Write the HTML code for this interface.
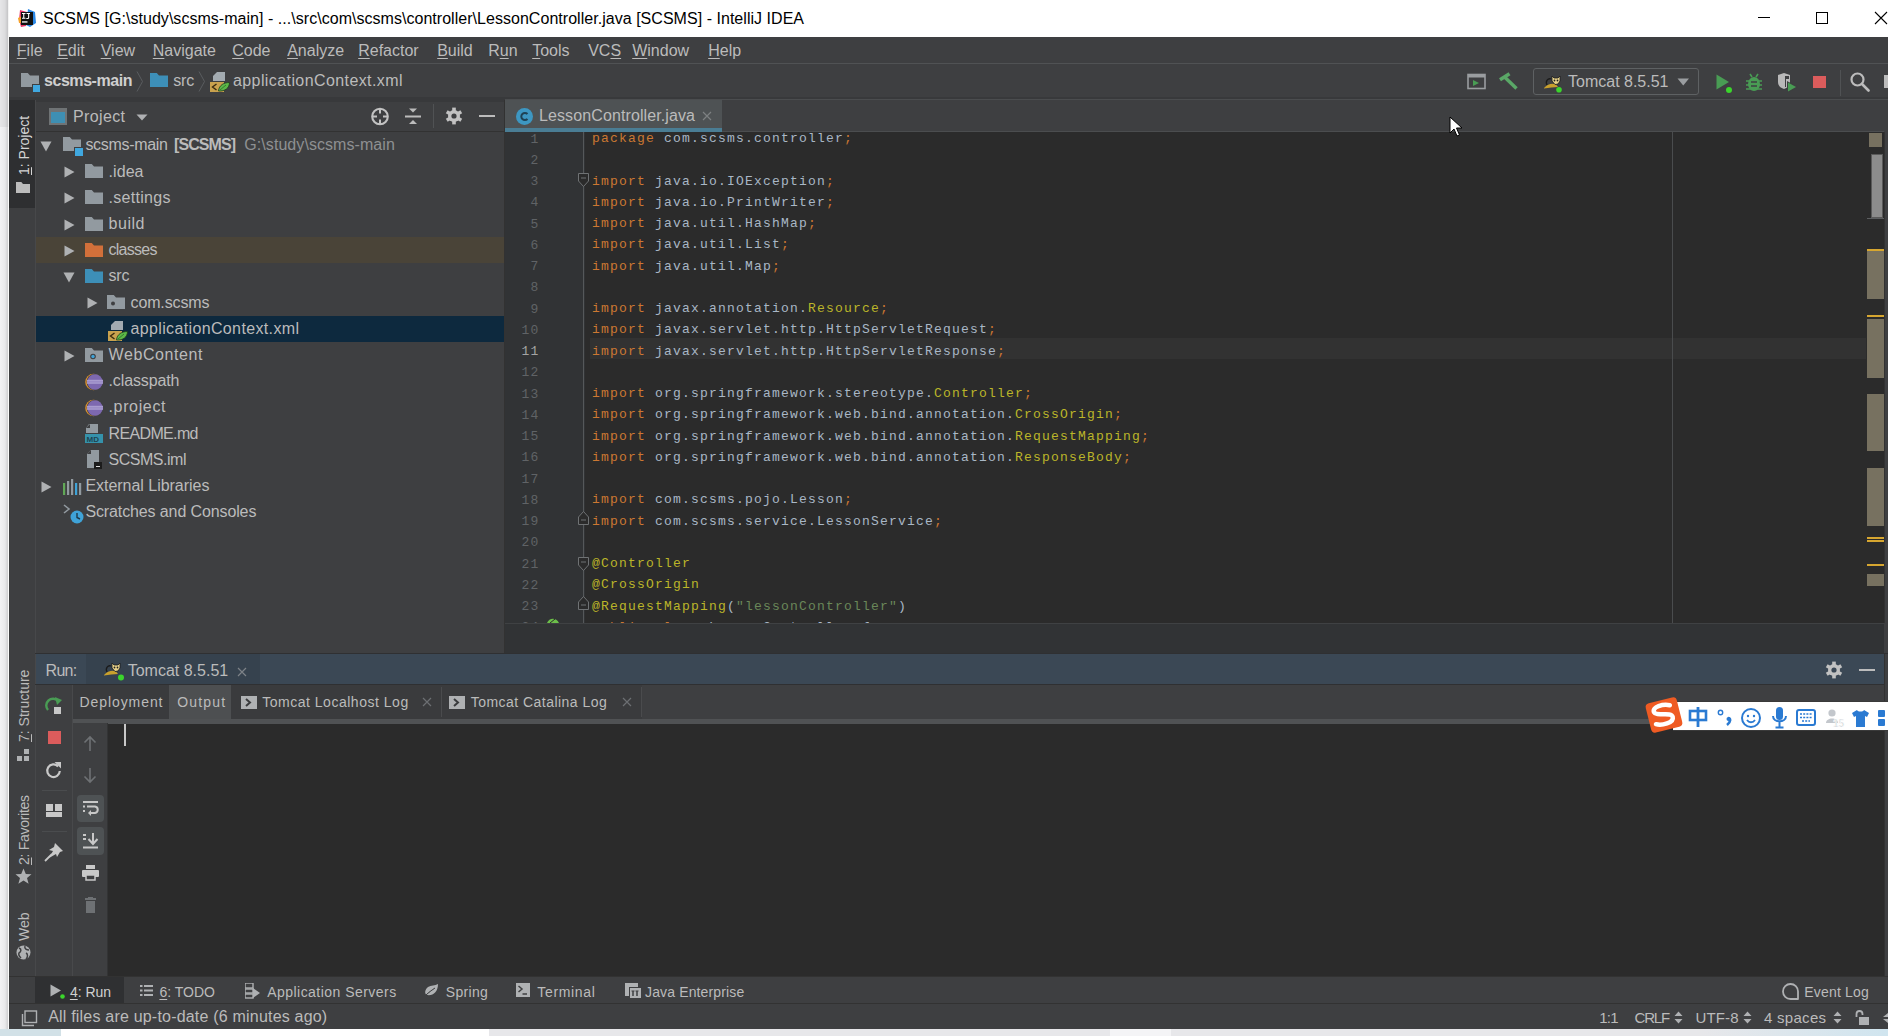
<!DOCTYPE html>
<html><head><meta charset="utf-8">
<style>
*{box-sizing:border-box;margin:0;padding:0}
html,body{width:1888px;height:1036px;overflow:hidden;background:#e6e6e6}
body{position:relative;font-family:"Liberation Sans",sans-serif;font-size:16px;color:#bbbbbb}
.a{position:absolute;display:block}
.t{position:absolute;white-space:pre;line-height:1}
u{text-decoration:underline;text-underline-offset:2px;text-decoration-thickness:1px}
</style></head><body>
<div class="a" style="left:0;top:0;width:9px;height:1036px;background:linear-gradient(90deg,#f2f2f4 0px,#e9e9eb 5px,#d2d2d4 7.5px,#fafafa 8px,#fafafa 9px)"></div>
<div class="a" style="left:0;top:0;width:9px;height:127px;background:linear-gradient(90deg,#e6e6e8 0px,#dcdcde 5px,#c8c8ca 7.5px,#f4f4f4 8px,#f4f4f4 9px)"></div>
<div class="a" style="left:0px;top:1029px;width:1888px;height:7px;background:#e7e7ea;"></div>
<div class="a" style="left:0px;top:1029px;width:61px;height:7px;background:#d2e1e7;"></div>
<div class="a" style="left:61px;top:1029px;width:428px;height:7px;background:#ffffff;"></div>
<div class="a" style="left:1110px;top:1029px;width:61px;height:7px;background:#f4f4f6;"></div>
<div class="a" style="left:1700px;top:1029px;width:188px;height:7px;background:linear-gradient(90deg,#e7e7ea,#d0e5ef)"></div>
<div class="a" style="left:9px;top:0px;width:1879px;height:1029px;background:#3e3f41;"></div>
<div class="a" style="left:9px;top:0px;width:1879px;height:37px;background:#ffffff;"></div>
<svg class="a" style="left:17px;top:8px;" width="22" height="20" viewBox="0 0 22 20"><polygon points="3,2 10,4 9,18 4,19 2,12" fill="#e8386a"/><polygon points="1,10 5,8 5,15 2,15" fill="#f6a12a"/>
<polygon points="11,1 18,4 19,15 13,19 9,17" fill="#2b88e6"/><rect x="4" y="4" width="12" height="13" fill="#111"/>
<path d="M5,5 H8.5 V6 H7.3 V9.8 H8.5 V10.8 H5 V9.8 H6.2 V6 H5 Z M9.5,5 H13 V6 H12.2 V9.5 C12.2,10.5 11.5,11 10.5,11 H9.3 V10 H10.5 C11,10 11.1,9.8 11.1,9.3 V6 H9.5 Z" fill="#fff"/><rect x="5" y="13.3" width="5.5" height="1.3" fill="#fff"/></svg>
<div class="t" style="left:43.00px;top:11.06px;font-size:16px;color:#000000;letter-spacing:0.034px;">SCSMS [G:\study\scsms-main] - ...\src\com\scsms\controller\LessonController.java [SCSMS] - IntelliJ IDEA</div>
<div class="a" style="left:1758px;top:17px;width:12px;height:1px;background:#000;"></div>
<div class="a" style="left:1816px;top:12px;width:12px;height:12px;border:1px solid #000"></div>
<svg class="a" style="left:1874px;top:11px;" width="14" height="14" viewBox="0 0 14 14"><path d="M1,1 L13,13 M13,1 L1,13" stroke="#000" stroke-width="1.1"/></svg>
<div class="a" style="left:9px;top:63px;width:1879px;height:1px;background:#505254;"></div>
<div class="t" style="left:16.80px;top:43.26px;font-size:16px;color:#bbbbbb;"><u>F</u>ile</div>
<div class="t" style="left:57.20px;top:43.26px;font-size:16px;color:#bbbbbb;"><u>E</u>dit</div>
<div class="t" style="left:100.70px;top:43.26px;font-size:16px;color:#bbbbbb;"><u>V</u>iew</div>
<div class="t" style="left:152.80px;top:43.26px;font-size:16px;color:#bbbbbb;"><u>N</u>avigate</div>
<div class="t" style="left:232.20px;top:43.26px;font-size:16px;color:#bbbbbb;"><u>C</u>ode</div>
<div class="t" style="left:287.20px;top:43.26px;font-size:16px;color:#bbbbbb;"><u>A</u>nalyze</div>
<div class="t" style="left:358.20px;top:43.26px;font-size:16px;color:#bbbbbb;"><u>R</u>efactor</div>
<div class="t" style="left:437.20px;top:43.26px;font-size:16px;color:#bbbbbb;"><u>B</u>uild</div>
<div class="t" style="left:488.20px;top:43.26px;font-size:16px;color:#bbbbbb;">R<u>u</u>n</div>
<div class="t" style="left:532.20px;top:43.26px;font-size:16px;color:#bbbbbb;"><u>T</u>ools</div>
<div class="t" style="left:588.20px;top:43.26px;font-size:16px;color:#bbbbbb;">VC<u>S</u></div>
<div class="t" style="left:632.20px;top:43.26px;font-size:16px;color:#bbbbbb;"><u>W</u>indow</div>
<div class="t" style="left:708.20px;top:43.26px;font-size:16px;color:#bbbbbb;"><u>H</u>elp</div>
<div class="a" style="left:9px;top:97px;width:1879px;height:3px;background:#38393b;"></div>
<svg class="a" style="left:21px;top:73px;" width="20" height="19" viewBox="0 0 20 19"><path d="M0,0 H6.8 L9.0,2.5 H18 V14 H0 Z" fill="#929aa0"/><rect x="11" y="11" width="8" height="8" fill="#3e3f41"/><rect x="12" y="12" width="7" height="7" fill="#40a8e0"/></svg>
<div class="t" style="left:44.00px;top:73.46px;font-size:16px;color:#cfcfcf;letter-spacing:-0.444px;font-weight:bold;">scsms-main</div>
<svg class="a" style="left:136px;top:71px;" width="8" height="21" viewBox="0 0 8 21"><path d="M1,0.5 L6.5,10.5 L1,20.5" fill="none" stroke="#5a5d60" stroke-width="1"/></svg>
<svg class="a" style="left:150px;top:73px;" width="19" height="15" viewBox="0 0 19 15"><path d="M0,0 H6.8 L9.0,2.5 H18 V14 H0 Z" fill="#3d8fb8"/></svg>
<div class="t" style="left:173.20px;top:73.46px;font-size:16px;color:#bbbbbb;letter-spacing:-0.164px;">src</div>
<svg class="a" style="left:198px;top:71px;" width="8" height="21" viewBox="0 0 8 21"><path d="M1,0.5 L6.5,10.5 L1,20.5" fill="none" stroke="#5a5d60" stroke-width="1"/></svg>
<svg class="a" style="left:209px;top:70px;" width="22" height="23" viewBox="0 0 22 23"><path d="M8,2 H16 V11 H4 V6 Z" fill="#a3abb1"/><rect x="1" y="12" width="14" height="10" fill="#c9a24e"/><path d="M7.5,14 L3.5,17 L7.5,20" stroke="#3a2a10" stroke-width="1.4" fill="none"/><path d="M9.5,21 C10,15 15,12.5 20.5,12.5 C20.5,18 16,21.5 9.5,21 Z" fill="#5cb848" stroke="#1f3a1a" stroke-width="0.8"/><path d="M11,20 L17,15" stroke="#2f6a28" stroke-width="0.8"/></svg>
<div class="t" style="left:233.00px;top:73.46px;font-size:16px;color:#bbbbbb;letter-spacing:0.406px;">applicationContext.xml</div>
<svg class="a" style="left:1467px;top:73px;" width="20" height="17" viewBox="0 0 20 17"><rect x="1" y="1.5" width="17" height="14" fill="none" stroke="#9a9da0" stroke-width="1.6"/><rect x="1" y="1.5" width="17" height="3" fill="#9a9da0"/><path d="M6,7 L12,10 L6,13 Z" fill="#499c54"/></svg>
<svg class="a" style="left:1498px;top:72px;" width="21" height="19" viewBox="0 0 21 19"><path d="M2,7.8 L11.5,1.8" stroke="#5aa867" stroke-width="3.6"/><path d="M6,4.5 L18.5,16.5" stroke="#5aa867" stroke-width="3.4"/></svg>
<div class="a" style="left:1533px;top:68px;width:166px;height:27px;border:1px solid #5e6163;border-radius:3px"></div>
<svg class="a" style="left:1543px;top:75px;" width="22" height="19" viewBox="0 0 22 19"><path d="M4,10 C2,6 5,3 8,4" stroke="#1a1a1a" stroke-width="1.3" fill="none"/><path d="M1,13 C5,9 9,8 13,9.5 L15,12 C11,12.5 6,12.5 1,13.5 Z" fill="#c9a02c"/><path d="M9,1 L11,3 H15 L17,1 V6 L15,9 L12,9.5 L9,6 Z" fill="#e8d28a" stroke="#1a1a1a" stroke-width="0.8"/><circle cx="11.5" cy="5.5" r="0.9" fill="#222"/><circle cx="14.5" cy="5.5" r="0.9" fill="#222"/><circle cx="16" cy="14.7" r="2.8" fill="#3bd52c"/></svg>
<div class="t" style="left:1568.00px;top:74.46px;font-size:16px;color:#bbbbbb;letter-spacing:0.000px;">Tomcat 8.5.51</div>
<svg class="a" style="left:1677px;top:78px;" width="13" height="8" viewBox="0 0 13 8"><path d="M0.5,0.5 H12 L6.25,7.5 Z" fill="#9a9da0"/></svg>
<svg class="a" style="left:1716px;top:74px;" width="18" height="20" viewBox="0 0 18 20"><path d="M0.5,0.5 L13,8 L0.5,15.5 Z" fill="#499c54"/><circle cx="13" cy="16" r="3" fill="#3bd52c"/></svg>
<svg class="a" style="left:1745px;top:73px;" width="18" height="20" viewBox="0 0 18 20"><path d="M5,1 L7,4 M13,1 L11,4" stroke="#499c54" stroke-width="1.6"/><ellipse cx="9" cy="11" rx="6" ry="7" fill="#499c54"/><path d="M1,8 H17 M1,12 H17 M1,16 H17" stroke="#499c54" stroke-width="1.6"/><path d="M6,9 H12 M6,13 H12" stroke="#3e3f41" stroke-width="1.6"/></svg>
<svg class="a" style="left:1777px;top:73px;" width="22" height="21" viewBox="0 0 22 21"><path d="M1,2 L7,0 L13,2 V9 C13,13 10,15 7,16 C4,15 1,13 1,9 Z" fill="#b9b9b9"/><path d="M8,3 H12 V6 H9 V14 L8,14 Z" fill="#3e3f41"/><path d="M10,8 L21,14 L10,20 Z" fill="#3e3f41"/><path d="M11,9.5 L19,14 L11,18.5 Z" fill="#499c54"/></svg>
<div class="a" style="left:1813px;top:76px;width:13px;height:12px;background:#db5c5c;"></div>
<div class="a" style="left:1840px;top:70px;width:1px;height:26px;background:#505254;"></div>
<svg class="a" style="left:1849px;top:71px;" width="22" height="21" viewBox="0 0 22 21"><circle cx="8.5" cy="8.5" r="6" fill="none" stroke="#bcbcbc" stroke-width="2.2"/><path d="M13,13 L19.5,19.5" stroke="#bcbcbc" stroke-width="2.6" stroke-linecap="round"/></svg>
<div class="a" style="left:1884px;top:75px;width:4px;height:13px;background:#bcbcbc;"></div>
<div class="a" style="left:35px;top:100px;width:1px;height:876px;background:#47484a;"></div>
<div class="a" style="left:9px;top:100px;width:26px;height:108px;background:#2e2f31;"></div>
<div class="t" style="left:16.5px;top:175px;font-size:14px;color:#d4d4d4;transform-origin:0 0;transform:rotate(-90deg)"><u>1</u>: Project</div>
<svg class="a" style="left:16px;top:182px;" width="14" height="12" viewBox="0 0 14 12"><path d="M0,0 H5.3 L7.0,2.0 H14 V11 H0 Z" fill="#bcbcbc"/></svg>
<div class="t" style="left:16.5px;top:742px;font-size:14px;color:#bbbbbb;transform-origin:0 0;transform:rotate(-90deg)"><u>7</u>: Structure</div>
<svg class="a" style="left:16px;top:749px;" width="14" height="13" viewBox="0 0 14 13"><rect x="8" y="0" width="5" height="5" fill="#afb1b3"/><rect x="1" y="7" width="5" height="5" fill="#afb1b3"/><rect x="8" y="7" width="5" height="5" fill="#afb1b3"/></svg>
<div class="t" style="left:16.5px;top:865px;font-size:14px;color:#bbbbbb;transform-origin:0 0;transform:rotate(-90deg)"><span style="letter-spacing:-0.28px"><u>2</u>: Favorites</span></div>
<svg class="a" style="left:15px;top:868px;" width="17" height="17" viewBox="0 0 17 17"><path d="M8.5,0.5 L10.8,6 L16.5,6.3 L12,10 L13.6,15.8 L8.5,12.6 L3.4,15.8 L5,10 L0.5,6.3 L6.2,6 Z" fill="#afb1b3"/></svg>
<div class="t" style="left:16.5px;top:941px;font-size:14px;color:#bbbbbb;transform-origin:0 0;transform:rotate(-90deg)">Web</div>
<svg class="a" style="left:15px;top:944px;" width="17" height="17" viewBox="0 0 17 17"><circle cx="8.5" cy="8.5" r="7" fill="#afb1b3"/><path d="M4,4 C7,5 6,8 4,9 C3,11 5,13 6,14 M10,2 C9,5 12,6 14,6 M11,9 C13,10 13,13 11,15" stroke="#3e3f41" stroke-width="1.5" fill="none"/></svg>
<div class="a" style="left:36px;top:99px;width:469px;height:3px;background:#38393b;"></div>
<div class="a" style="left:36px;top:131px;width:469px;height:1px;background:#323232;"></div>
<div class="a" style="left:504px;top:100px;width:1px;height:554px;background:#323232;"></div>
<svg class="a" style="left:49px;top:108px;" width="19" height="17" viewBox="0 0 19 17"><rect x="1" y="1" width="16" height="15" fill="none" stroke="#6f7375" stroke-width="2"/><rect x="2" y="4" width="14" height="11" fill="#3e8fb3"/><rect x="2" y="2" width="14" height="2" fill="#6f7375"/></svg>
<div class="t" style="left:73.00px;top:108.66px;font-size:16px;color:#bbbbbb;letter-spacing:0.367px;">Project</div>
<svg class="a" style="left:136px;top:114px;" width="12" height="7" viewBox="0 0 12 7"><path d="M0.5,0.5 H11.5 L6,6.5 Z" fill="#afb1b3"/></svg>
<svg class="a" style="left:370px;top:107px;" width="20" height="19" viewBox="0 0 20 19"><circle cx="10" cy="9.5" r="7.8" fill="none" stroke="#c2c2c2" stroke-width="2.1"/><path d="M10,2 V6.5 M10,12.5 V17 M2.5,9.5 H7 M13,9.5 H17.5" stroke="#c2c2c2" stroke-width="2"/></svg>
<svg class="a" style="left:404px;top:107px;" width="18" height="19" viewBox="0 0 18 19"><path d="M1,9.5 H17" stroke="#bcbcbc" stroke-width="2"/><path d="M5,1.5 H13 L9,5.5 Z M5,17 H13 L9,13 Z" fill="#bcbcbc"/></svg>
<div class="a" style="left:433px;top:104px;width:1px;height:24px;background:#505254;"></div>
<svg class="a" style="left:445px;top:107px;" width="18" height="18" viewBox="0 0 18 18"><rect x="7.2" y="0.6" width="3.6" height="4" fill="#c2c2c2" transform="rotate(0 9 9)"/><rect x="7.2" y="0.6" width="3.6" height="4" fill="#c2c2c2" transform="rotate(60 9 9)"/><rect x="7.2" y="0.6" width="3.6" height="4" fill="#c2c2c2" transform="rotate(120 9 9)"/><rect x="7.2" y="0.6" width="3.6" height="4" fill="#c2c2c2" transform="rotate(180 9 9)"/><rect x="7.2" y="0.6" width="3.6" height="4" fill="#c2c2c2" transform="rotate(240 9 9)"/><rect x="7.2" y="0.6" width="3.6" height="4" fill="#c2c2c2" transform="rotate(300 9 9)"/><circle cx="9" cy="9" r="6" fill="#c2c2c2"/><circle cx="9" cy="9" r="2.6" fill="#3e3f41"/></svg>
<div class="a" style="left:479px;top:115px;width:16px;height:2px;background:#bcbcbc;"></div>
<div class="a" style="left:36px;top:237px;width:468px;height:26px;background:#4a4438;"></div>
<div class="a" style="left:36px;top:316px;width:468px;height:26px;background:#0d293e;"></div>
<svg class="a" style="left:40px;top:141.0px;" width="12" height="11" viewBox="0 0 12 11"><path d="M0.5,0.5 H11.5 L6,10.5 Z" fill="#afb1b3"/></svg>
<svg class="a" style="left:63px;top:137px;" width="21" height="19" viewBox="0 0 21 19"><path d="M0,0 H6.8 L9.0,2.5 H18 V14 H0 Z" fill="#929aa0"/><rect x="11" y="10" width="9" height="9" fill="#3e3f41"/><rect x="12" y="11" width="8" height="8" fill="#40a8e0"/></svg>
<div class="t" style="left:85.40px;top:137.46px;font-size:16px;color:#bbbbbb;letter-spacing:-0.304px;">scsms-main</div>
<div class="t" style="left:174.00px;top:137.46px;font-size:16px;color:#bbbbbb;letter-spacing:-0.926px;font-weight:bold;">[SCSMS]</div>
<div class="t" style="left:244.30px;top:137.46px;font-size:16px;color:#8e9092;letter-spacing:0.063px;">G:\study\scsms-main</div>
<svg class="a" style="left:64px;top:166.2px;" width="11" height="12" viewBox="0 0 11 12"><path d="M0.5,0.5 L10.5,6 L0.5,11.5 Z" fill="#afb1b3"/></svg>
<svg class="a" style="left:85px;top:164px;" width="19" height="15" viewBox="0 0 19 15"><path d="M0,0 H6.8 L9.0,2.5 H18 V14 H0 Z" fill="#929aa0"/></svg>
<div class="t" style="left:108.50px;top:163.66px;font-size:16px;color:#bbbbbb;letter-spacing:0.076px;">.idea</div>
<svg class="a" style="left:64px;top:192.4px;" width="11" height="12" viewBox="0 0 11 12"><path d="M0.5,0.5 L10.5,6 L0.5,11.5 Z" fill="#afb1b3"/></svg>
<svg class="a" style="left:85px;top:190px;" width="19" height="15" viewBox="0 0 19 15"><path d="M0,0 H6.8 L9.0,2.5 H18 V14 H0 Z" fill="#929aa0"/></svg>
<div class="t" style="left:108.50px;top:189.86px;font-size:16px;color:#bbbbbb;letter-spacing:0.302px;">.settings</div>
<svg class="a" style="left:64px;top:218.6px;" width="11" height="12" viewBox="0 0 11 12"><path d="M0.5,0.5 L10.5,6 L0.5,11.5 Z" fill="#afb1b3"/></svg>
<svg class="a" style="left:85px;top:217px;" width="19" height="15" viewBox="0 0 19 15"><path d="M0,0 H6.8 L9.0,2.5 H18 V14 H0 Z" fill="#929aa0"/></svg>
<div class="t" style="left:108.50px;top:216.06px;font-size:16px;color:#bbbbbb;letter-spacing:0.549px;">build</div>
<svg class="a" style="left:64px;top:244.8px;" width="11" height="12" viewBox="0 0 11 12"><path d="M0.5,0.5 L10.5,6 L0.5,11.5 Z" fill="#afb1b3"/></svg>
<svg class="a" style="left:85px;top:243px;" width="19" height="15" viewBox="0 0 19 15"><path d="M0,0 H6.8 L9.0,2.5 H18 V14 H0 Z" fill="#d2703a"/></svg>
<div class="t" style="left:108.50px;top:242.26px;font-size:16px;color:#bbbbbb;letter-spacing:-0.725px;">classes</div>
<svg class="a" style="left:63px;top:272.0px;" width="12" height="11" viewBox="0 0 12 11"><path d="M0.5,0.5 H11.5 L6,10.5 Z" fill="#afb1b3"/></svg>
<svg class="a" style="left:85px;top:269px;" width="19" height="15" viewBox="0 0 19 15"><path d="M0,0 H6.8 L9.0,2.5 H18 V14 H0 Z" fill="#3d8fb8"/></svg>
<div class="t" style="left:108.50px;top:268.46px;font-size:16px;color:#bbbbbb;letter-spacing:-0.164px;">src</div>
<svg class="a" style="left:87px;top:297.2px;" width="11" height="12" viewBox="0 0 11 12"><path d="M0.5,0.5 L10.5,6 L0.5,11.5 Z" fill="#afb1b3"/></svg>
<svg class="a" style="left:107px;top:295px;" width="19" height="15" viewBox="0 0 19 15"><path d="M0,0 H6.8 L9.0,2.5 H18 V14 H0 Z" fill="#929aa0"/><circle cx="6" cy="8.5" r="2" fill="#3e3f41"/></svg>
<div class="t" style="left:130.50px;top:294.66px;font-size:16px;color:#bbbbbb;letter-spacing:-0.125px;">com.scsms</div>
<svg class="a" style="left:107px;top:319px;" width="22" height="23" viewBox="0 0 22 23"><path d="M8,2 H16 V11 H4 V6 Z" fill="#a3abb1"/><rect x="1" y="12" width="14" height="10" fill="#c9a24e"/><path d="M7.5,14 L3.5,17 L7.5,20" stroke="#3a2a10" stroke-width="1.4" fill="none"/><path d="M9.5,21 C10,15 15,12.5 20.5,12.5 C20.5,18 16,21.5 9.5,21 Z" fill="#5cb848" stroke="#1f3a1a" stroke-width="0.8"/><path d="M11,20 L17,15" stroke="#2f6a28" stroke-width="0.8"/></svg>
<div class="t" style="left:130.50px;top:320.86px;font-size:16px;color:#bbbbbb;letter-spacing:0.359px;">applicationContext.xml</div>
<svg class="a" style="left:64px;top:349.6px;" width="11" height="12" viewBox="0 0 11 12"><path d="M0.5,0.5 L10.5,6 L0.5,11.5 Z" fill="#afb1b3"/></svg>
<svg class="a" style="left:85px;top:348px;" width="19" height="15" viewBox="0 0 19 15"><path d="M0,0 H6.8 L9.0,2.5 H18 V14 H0 Z" fill="#929aa0"/><circle cx="8" cy="8.5" r="2.8" fill="#3e3f41"/><circle cx="8" cy="8.5" r="1.7" fill="#3fa3d8"/></svg>
<div class="t" style="left:108.50px;top:347.06px;font-size:16px;color:#bbbbbb;letter-spacing:0.595px;">WebContent</div>
<svg class="a" style="left:84px;top:373px;" width="20" height="18" viewBox="0 0 20 18"><circle cx="9.5" cy="9" r="8.3" fill="#d8902f"/><circle cx="10.6" cy="9" r="8" fill="#3e3f41"/><circle cx="11" cy="9" r="7.7" fill="#7d68b0"/><rect x="3" y="6.8" width="16" height="4" fill="#a99ccf"/><rect x="3" y="8.5" width="16" height="0.8" fill="#8f7fc0"/></svg>
<div class="t" style="left:108.50px;top:373.26px;font-size:16px;color:#bbbbbb;letter-spacing:-0.115px;">.classpath</div>
<svg class="a" style="left:84px;top:399px;" width="20" height="18" viewBox="0 0 20 18"><circle cx="9.5" cy="9" r="8.3" fill="#d8902f"/><circle cx="10.6" cy="9" r="8" fill="#3e3f41"/><circle cx="11" cy="9" r="7.7" fill="#7d68b0"/><rect x="3" y="6.8" width="16" height="4" fill="#a99ccf"/><rect x="3" y="8.5" width="16" height="0.8" fill="#8f7fc0"/></svg>
<div class="t" style="left:108.50px;top:399.46px;font-size:16px;color:#bbbbbb;letter-spacing:0.647px;">.project</div>
<svg class="a" style="left:85px;top:424px;" width="19" height="20" viewBox="0 0 19 20"><path d="M4,0 H13 V9 H1 V4 Z" fill="#929aa0"/><path d="M1,4 L5,4 L5,0 Z" fill="#3e3f41"/><rect x="0" y="10" width="18" height="9" fill="#3592ab"/><text x="1.5" y="17.8" font-family="Liberation Sans" font-weight="bold" font-size="8" fill="#1f4452">MD</text></svg>
<div class="t" style="left:108.50px;top:425.66px;font-size:16px;color:#bbbbbb;letter-spacing:-0.641px;">README.md</div>
<svg class="a" style="left:87px;top:450px;" width="16" height="20" viewBox="0 0 16 20"><path d="M4,0 H12 V18 H0 V4 Z" fill="#929aa0"/><path d="M0,4 L4,4 L4,0 Z" fill="#3e3f41"/><rect x="7" y="12" width="8" height="7" fill="#1c1c1c"/><rect x="9" y="16" width="4" height="1" fill="#ddd"/></svg>
<div class="t" style="left:108.50px;top:451.86px;font-size:16px;color:#bbbbbb;letter-spacing:-0.473px;">SCSMS.iml</div>
<svg class="a" style="left:41px;top:480.59999999999997px;" width="11" height="12" viewBox="0 0 11 12"><path d="M0.5,0.5 L10.5,6 L0.5,11.5 Z" fill="#afb1b3"/></svg>
<svg class="a" style="left:63px;top:479px;" width="20" height="16" viewBox="0 0 20 16"><rect x="0" y="4" width="2.2" height="12" fill="#61a857"/><rect x="4" y="2" width="2.2" height="14" fill="#929aa0"/><rect x="8" y="0" width="2.2" height="16" fill="#929aa0"/><rect x="12" y="4" width="2.2" height="12" fill="#3fa3d8"/><rect x="16" y="4" width="2.2" height="12" fill="#929aa0"/></svg>
<div class="t" style="left:85.40px;top:478.06px;font-size:16px;color:#bbbbbb;letter-spacing:-0.029px;">External Libraries</div>
<svg class="a" style="left:63px;top:504px;" width="21" height="20" viewBox="0 0 21 20"><path d="M1,1 L6,5 L1,9" stroke="#929aa0" stroke-width="1.6" fill="none"/><rect x="0" y="0" width="10" height="11" fill="none"/><circle cx="14" cy="13" r="6.5" fill="#3fa3d8"/><path d="M14,9 V13.5 L17,15" stroke="#1f3a4a" stroke-width="1.4" fill="none"/></svg>
<div class="t" style="left:85.40px;top:504.26px;font-size:16px;color:#bbbbbb;letter-spacing:-0.116px;">Scratches and Consoles</div>
<div class="a" style="left:505px;top:100px;width:1383px;height:32px;background:#3e3f41;"></div>
<div class="a" style="left:505px;top:99px;width:1383px;height:1px;background:#4b4d4f;"></div>
<div class="a" style="left:505px;top:100px;width:217px;height:28px;background:#4e5254;"></div>
<div class="a" style="left:722px;top:131px;width:1162px;height:1px;background:#4b4d4f;"></div>
<div class="a" style="left:505px;top:128px;width:217px;height:4px;background:#4a7d94;"></div>
<svg class="a" style="left:515px;top:107px;" width="19" height="19" viewBox="0 0 19 19"><circle cx="9.5" cy="9.5" r="8.5" fill="#3d97c2"/><path d="M12.5,7 A3.6,3.6 0 1 0 12.5,12" fill="none" stroke="#1f4254" stroke-width="2"/></svg>
<div class="t" style="left:539.00px;top:107.86px;font-size:16px;color:#bbbbbb;letter-spacing:0.107px;">LessonController.java</div>
<svg class="a" style="left:702px;top:111px;" width="10" height="10" viewBox="0 0 10 10"><path d="M1,1 L9,9 M9,1 L1,9" stroke="#7d8082" stroke-width="1.2"/></svg>
<div class="a" style="left:505px;top:132px;width:1379px;height:492px;background:#2b2b2b;"></div>
<div class="a" style="left:505px;top:132px;width:80px;height:492px;background:#313335;"></div>
<div class="a" style="left:505px;top:624px;width:1379px;height:30px;background:#313335;"></div>
<div class="a" style="left:505px;top:623px;width:1379px;height:1px;background:#3f4143;"></div>
<div class="a" style="left:583px;top:132px;width:1px;height:492px;background:#55585a;"></div>
<div class="a" style="left:590px;top:338px;width:1276px;height:21px;background:#323232;"></div>
<div class="a" style="left:1672px;top:132px;width:1px;height:492px;background:#4a4c4e;"></div>
<div class="t" style="left:530.50px;top:132.74px;font-size:13px;color:#606366;font-family:'Liberation Mono',monospace;letter-spacing:1.2px;">1</div>
<div class="t" style="left:592.00px;top:132.24px;font-size:13px;color:#a9b7c6;font-family:'Liberation Mono',monospace;letter-spacing:1.2px;"><span style="color:#cc7832">package</span><span style="color:#a9b7c6"> com.scsms.controller</span><span style="color:#cc7832">;</span></div>
<div class="t" style="left:530.50px;top:153.99px;font-size:13px;color:#606366;font-family:'Liberation Mono',monospace;letter-spacing:1.2px;">2</div>
<div class="t" style="left:530.50px;top:175.24px;font-size:13px;color:#606366;font-family:'Liberation Mono',monospace;letter-spacing:1.2px;">3</div>
<div class="t" style="left:592.00px;top:174.74px;font-size:13px;color:#a9b7c6;font-family:'Liberation Mono',monospace;letter-spacing:1.2px;"><span style="color:#cc7832">import</span><span style="color:#a9b7c6"> java.io.IOException</span><span style="color:#cc7832">;</span></div>
<div class="t" style="left:530.50px;top:196.49px;font-size:13px;color:#606366;font-family:'Liberation Mono',monospace;letter-spacing:1.2px;">4</div>
<div class="t" style="left:592.00px;top:195.99px;font-size:13px;color:#a9b7c6;font-family:'Liberation Mono',monospace;letter-spacing:1.2px;"><span style="color:#cc7832">import</span><span style="color:#a9b7c6"> java.io.PrintWriter</span><span style="color:#cc7832">;</span></div>
<div class="t" style="left:530.50px;top:217.74px;font-size:13px;color:#606366;font-family:'Liberation Mono',monospace;letter-spacing:1.2px;">5</div>
<div class="t" style="left:592.00px;top:217.24px;font-size:13px;color:#a9b7c6;font-family:'Liberation Mono',monospace;letter-spacing:1.2px;"><span style="color:#cc7832">import</span><span style="color:#a9b7c6"> java.util.HashMap</span><span style="color:#cc7832">;</span></div>
<div class="t" style="left:530.50px;top:238.99px;font-size:13px;color:#606366;font-family:'Liberation Mono',monospace;letter-spacing:1.2px;">6</div>
<div class="t" style="left:592.00px;top:238.49px;font-size:13px;color:#a9b7c6;font-family:'Liberation Mono',monospace;letter-spacing:1.2px;"><span style="color:#cc7832">import</span><span style="color:#a9b7c6"> java.util.List</span><span style="color:#cc7832">;</span></div>
<div class="t" style="left:530.50px;top:260.24px;font-size:13px;color:#606366;font-family:'Liberation Mono',monospace;letter-spacing:1.2px;">7</div>
<div class="t" style="left:592.00px;top:259.74px;font-size:13px;color:#a9b7c6;font-family:'Liberation Mono',monospace;letter-spacing:1.2px;"><span style="color:#cc7832">import</span><span style="color:#a9b7c6"> java.util.Map</span><span style="color:#cc7832">;</span></div>
<div class="t" style="left:530.50px;top:281.49px;font-size:13px;color:#606366;font-family:'Liberation Mono',monospace;letter-spacing:1.2px;">8</div>
<div class="t" style="left:530.50px;top:302.74px;font-size:13px;color:#606366;font-family:'Liberation Mono',monospace;letter-spacing:1.2px;">9</div>
<div class="t" style="left:592.00px;top:302.24px;font-size:13px;color:#a9b7c6;font-family:'Liberation Mono',monospace;letter-spacing:1.2px;"><span style="color:#cc7832">import</span><span style="color:#a9b7c6"> javax.annotation.</span><span style="color:#bbb529">Resource</span><span style="color:#cc7832">;</span></div>
<div class="t" style="left:521.50px;top:323.99px;font-size:13px;color:#606366;font-family:'Liberation Mono',monospace;letter-spacing:1.2px;">10</div>
<div class="t" style="left:592.00px;top:323.49px;font-size:13px;color:#a9b7c6;font-family:'Liberation Mono',monospace;letter-spacing:1.2px;"><span style="color:#cc7832">import</span><span style="color:#a9b7c6"> javax.servlet.http.HttpServletRequest</span><span style="color:#cc7832">;</span></div>
<div class="t" style="left:521.50px;top:345.24px;font-size:13px;color:#a4a3a3;font-family:'Liberation Mono',monospace;letter-spacing:1.2px;">11</div>
<div class="t" style="left:592.00px;top:344.74px;font-size:13px;color:#a9b7c6;font-family:'Liberation Mono',monospace;letter-spacing:1.2px;"><span style="color:#cc7832">import</span><span style="color:#a9b7c6"> javax.servlet.http.HttpServletResponse</span><span style="color:#cc7832">;</span></div>
<div class="t" style="left:521.50px;top:366.49px;font-size:13px;color:#606366;font-family:'Liberation Mono',monospace;letter-spacing:1.2px;">12</div>
<div class="t" style="left:521.50px;top:387.74px;font-size:13px;color:#606366;font-family:'Liberation Mono',monospace;letter-spacing:1.2px;">13</div>
<div class="t" style="left:592.00px;top:387.24px;font-size:13px;color:#a9b7c6;font-family:'Liberation Mono',monospace;letter-spacing:1.2px;"><span style="color:#cc7832">import</span><span style="color:#a9b7c6"> org.springframework.stereotype.</span><span style="color:#bbb529">Controller</span><span style="color:#cc7832">;</span></div>
<div class="t" style="left:521.50px;top:408.99px;font-size:13px;color:#606366;font-family:'Liberation Mono',monospace;letter-spacing:1.2px;">14</div>
<div class="t" style="left:592.00px;top:408.49px;font-size:13px;color:#a9b7c6;font-family:'Liberation Mono',monospace;letter-spacing:1.2px;"><span style="color:#cc7832">import</span><span style="color:#a9b7c6"> org.springframework.web.bind.annotation.</span><span style="color:#bbb529">CrossOrigin</span><span style="color:#cc7832">;</span></div>
<div class="t" style="left:521.50px;top:430.24px;font-size:13px;color:#606366;font-family:'Liberation Mono',monospace;letter-spacing:1.2px;">15</div>
<div class="t" style="left:592.00px;top:429.74px;font-size:13px;color:#a9b7c6;font-family:'Liberation Mono',monospace;letter-spacing:1.2px;"><span style="color:#cc7832">import</span><span style="color:#a9b7c6"> org.springframework.web.bind.annotation.</span><span style="color:#bbb529">RequestMapping</span><span style="color:#cc7832">;</span></div>
<div class="t" style="left:521.50px;top:451.49px;font-size:13px;color:#606366;font-family:'Liberation Mono',monospace;letter-spacing:1.2px;">16</div>
<div class="t" style="left:592.00px;top:450.99px;font-size:13px;color:#a9b7c6;font-family:'Liberation Mono',monospace;letter-spacing:1.2px;"><span style="color:#cc7832">import</span><span style="color:#a9b7c6"> org.springframework.web.bind.annotation.</span><span style="color:#bbb529">ResponseBody</span><span style="color:#cc7832">;</span></div>
<div class="t" style="left:521.50px;top:472.74px;font-size:13px;color:#606366;font-family:'Liberation Mono',monospace;letter-spacing:1.2px;">17</div>
<div class="t" style="left:521.50px;top:493.99px;font-size:13px;color:#606366;font-family:'Liberation Mono',monospace;letter-spacing:1.2px;">18</div>
<div class="t" style="left:592.00px;top:493.49px;font-size:13px;color:#a9b7c6;font-family:'Liberation Mono',monospace;letter-spacing:1.2px;"><span style="color:#cc7832">import</span><span style="color:#a9b7c6"> com.scsms.pojo.Lesson</span><span style="color:#cc7832">;</span></div>
<div class="t" style="left:521.50px;top:515.24px;font-size:13px;color:#606366;font-family:'Liberation Mono',monospace;letter-spacing:1.2px;">19</div>
<div class="t" style="left:592.00px;top:514.74px;font-size:13px;color:#a9b7c6;font-family:'Liberation Mono',monospace;letter-spacing:1.2px;"><span style="color:#cc7832">import</span><span style="color:#a9b7c6"> com.scsms.service.LessonService</span><span style="color:#cc7832">;</span></div>
<div class="t" style="left:521.50px;top:536.49px;font-size:13px;color:#606366;font-family:'Liberation Mono',monospace;letter-spacing:1.2px;">20</div>
<div class="t" style="left:521.50px;top:557.74px;font-size:13px;color:#606366;font-family:'Liberation Mono',monospace;letter-spacing:1.2px;">21</div>
<div class="t" style="left:592.00px;top:557.24px;font-size:13px;color:#a9b7c6;font-family:'Liberation Mono',monospace;letter-spacing:1.2px;"><span style="color:#bbb529">@Controller</span></div>
<div class="t" style="left:521.50px;top:578.99px;font-size:13px;color:#606366;font-family:'Liberation Mono',monospace;letter-spacing:1.2px;">22</div>
<div class="t" style="left:592.00px;top:578.49px;font-size:13px;color:#a9b7c6;font-family:'Liberation Mono',monospace;letter-spacing:1.2px;"><span style="color:#bbb529">@CrossOrigin</span></div>
<div class="t" style="left:521.50px;top:600.24px;font-size:13px;color:#606366;font-family:'Liberation Mono',monospace;letter-spacing:1.2px;">23</div>
<div class="t" style="left:592.00px;top:599.74px;font-size:13px;color:#a9b7c6;font-family:'Liberation Mono',monospace;letter-spacing:1.2px;"><span style="color:#bbb529">@RequestMapping</span><span style="color:#a9b7c6">(</span><span style="color:#6a8759">&quot;lessonController&quot;</span><span style="color:#a9b7c6">)</span></div>
<div class="t" style="left:521.50px;top:621.49px;font-size:13px;color:#606366;font-family:'Liberation Mono',monospace;letter-spacing:1.2px;">24</div>
<div class="t" style="left:592.00px;top:620.99px;font-size:13px;color:#a9b7c6;font-family:'Liberation Mono',monospace;letter-spacing:1.2px;"><span style="color:#cc7832">public class</span><span style="color:#a9b7c6"> LessonController {</span></div>
<div class="a" style="left:505px;top:624px;width:1379px;height:30px;background:#313335;"></div>
<div class="a" style="left:505px;top:623px;width:1379px;height:1px;background:#3f4143;"></div>
<svg class="a" style="left:578px;top:173px;" width="12" height="15" viewBox="0 0 12 15"><path d="M0.5,0.5 H10.5 V8 L5.5,13.5 L0.5,8 Z" fill="#2b2b2b" stroke="#6f7274" stroke-width="1"/><path d="M3,5 H8" stroke="#6f7274" stroke-width="1"/></svg>
<svg class="a" style="left:578px;top:510px;" width="12" height="15" viewBox="0 0 12 15"><path d="M0.5,14.5 H10.5 V7 L5.5,1.5 L0.5,7 Z" fill="#2b2b2b" stroke="#6f7274" stroke-width="1"/><path d="M3,10 H8" stroke="#6f7274" stroke-width="1"/></svg>
<svg class="a" style="left:578px;top:557px;" width="12" height="15" viewBox="0 0 12 15"><path d="M0.5,0.5 H10.5 V8 L5.5,13.5 L0.5,8 Z" fill="#2b2b2b" stroke="#6f7274" stroke-width="1"/><path d="M3,5 H8" stroke="#6f7274" stroke-width="1"/></svg>
<svg class="a" style="left:578px;top:595px;" width="12" height="15" viewBox="0 0 12 15"><path d="M0.5,14.5 H10.5 V7 L5.5,1.5 L0.5,7 Z" fill="#2b2b2b" stroke="#6f7274" stroke-width="1"/><path d="M3,10 H8" stroke="#6f7274" stroke-width="1"/></svg>
<svg class="a" style="left:546px;top:617px;" width="14" height="6" viewBox="0 0 14 6"><path d="M1,6 C3,1 10,0 13,6 Z" fill="#6cbf4a"/><path d="M4,6 L9,2" stroke="#2b2b2b" stroke-width="1"/></svg>
<div class="a" style="left:1869px;top:133px;width:13px;height:14px;background:#777160;"></div>
<div class="a" style="left:1871px;top:154px;width:12px;height:64px;background:#8c8c8c;border:1px solid #5a5a5a"></div>
<div class="a" style="left:1867px;top:218px;width:17px;height:1px;background:#5c5e60;"></div>
<div class="a" style="left:1867px;top:249px;width:17px;height:2px;background:#d6a630;"></div>
<div class="a" style="left:1867px;top:251px;width:17px;height:48px;background:#777160;"></div>
<div class="a" style="left:1867px;top:315px;width:17px;height:2px;background:#d6a630;"></div>
<div class="a" style="left:1867px;top:319px;width:17px;height:59px;background:#777160;"></div>
<div class="a" style="left:1867px;top:394px;width:17px;height:57px;background:#777160;"></div>
<div class="a" style="left:1867px;top:468px;width:17px;height:58px;background:#777160;"></div>
<div class="a" style="left:1867px;top:537px;width:17px;height:2px;background:#d6a630;"></div>
<div class="a" style="left:1867px;top:540px;width:17px;height:2px;background:#d6a630;"></div>
<div class="a" style="left:1867px;top:564px;width:17px;height:2px;background:#d6a630;"></div>
<div class="a" style="left:1867px;top:574px;width:17px;height:12px;background:#777160;"></div>
<div class="a" style="left:1884px;top:100px;width:4px;height:554px;background:#3e3f41;"></div>
<div class="a" style="left:1884px;top:132px;width:1px;height:491px;background:#323232;"></div>
<div class="a" style="left:35px;top:653px;width:1853px;height:1px;background:#2f3032;"></div>
<div class="a" style="left:36px;top:654px;width:1848px;height:30px;background:#3b4855;"></div>
<div class="a" style="left:86px;top:654px;width:174px;height:30px;background:#36424e;"></div>
<div class="t" style="left:45.60px;top:663.06px;font-size:16px;color:#bbbbbb;letter-spacing:-0.766px;">Run:</div>
<svg class="a" style="left:103px;top:662px;" width="22" height="19" viewBox="0 0 22 19"><path d="M4,10 C2,6 5,3 8,4" stroke="#1a1a1a" stroke-width="1.3" fill="none"/><path d="M1,13 C5,9 9,8 13,9.5 L15,12 C11,12.5 6,12.5 1,13.5 Z" fill="#c9a02c"/><path d="M9,1 L11,3 H15 L17,1 V6 L15,9 L12,9.5 L9,6 Z" fill="#e8d28a" stroke="#1a1a1a" stroke-width="0.8"/><circle cx="11.5" cy="5.5" r="0.9" fill="#222"/><circle cx="14.5" cy="5.5" r="0.9" fill="#222"/><circle cx="18" cy="15.5" r="3" fill="#3bd52c"/></svg>
<div class="t" style="left:127.70px;top:663.06px;font-size:16px;color:#bbbbbb;letter-spacing:0.000px;">Tomcat 8.5.51</div>
<svg class="a" style="left:237px;top:667px;" width="10" height="10" viewBox="0 0 10 10"><path d="M1,1 L9,9 M9,1 L1,9" stroke="#7d8287" stroke-width="1.2"/></svg>
<svg class="a" style="left:1825px;top:661px;" width="18" height="18" viewBox="0 0 18 18"><rect x="7.2" y="0.6" width="3.6" height="4" fill="#c2c2c2" transform="rotate(0 9 9)"/><rect x="7.2" y="0.6" width="3.6" height="4" fill="#c2c2c2" transform="rotate(60 9 9)"/><rect x="7.2" y="0.6" width="3.6" height="4" fill="#c2c2c2" transform="rotate(120 9 9)"/><rect x="7.2" y="0.6" width="3.6" height="4" fill="#c2c2c2" transform="rotate(180 9 9)"/><rect x="7.2" y="0.6" width="3.6" height="4" fill="#c2c2c2" transform="rotate(240 9 9)"/><rect x="7.2" y="0.6" width="3.6" height="4" fill="#c2c2c2" transform="rotate(300 9 9)"/><circle cx="9" cy="9" r="6" fill="#c2c2c2"/><circle cx="9" cy="9" r="2.6" fill="#3b4855"/></svg>
<div class="a" style="left:1859px;top:669px;width:16px;height:2px;background:#bcbcbc;"></div>
<div class="a" style="left:35px;top:684px;width:1853px;height:1px;background:#2f3032;"></div>
<div class="a" style="left:72px;top:685px;width:1px;height:291px;background:#48494b;"></div>
<svg class="a" style="left:45px;top:696px;" width="19" height="19" viewBox="0 0 19 19"><path d="M3,14 A6.5,6.5 0 1 1 13,5" fill="none" stroke="#499c54" stroke-width="2.4"/><path d="M10,1 L17,4 L12,9 Z" fill="#499c54"/><rect x="9" y="11" width="7" height="7" fill="#c8c8c8"/></svg>
<div class="a" style="left:48px;top:731px;width:13px;height:13px;background:#db5c5c;"></div>
<svg class="a" style="left:45px;top:761px;" width="17" height="18" viewBox="0 0 17 18"><path d="M13.1,5.4 A6.3,6.3 0 1 0 14.8,10" fill="none" stroke="#c8c8c8" stroke-width="2.2"/><path d="M9.5,1 H16 V7.5 Z" fill="#c8c8c8"/></svg>
<div class="a" style="left:42px;top:790px;width:25px;height:1px;background:#4a4c4e;"></div>
<svg class="a" style="left:46px;top:804px;" width="17" height="14" viewBox="0 0 17 14"><rect x="0" y="0" width="7" height="7" fill="#c8c8c8"/><rect x="9" y="0" width="7" height="7" fill="#c8c8c8"/><rect x="0" y="8" width="16" height="5" fill="#c8c8c8"/></svg>
<div class="a" style="left:42px;top:831px;width:25px;height:1px;background:#4a4c4e;"></div>
<svg class="a" style="left:44px;top:842px;" width="20" height="20" viewBox="0 0 20 20"><path d="M11,1 L19,9 L16,10 L13,15 L12,12 L5,16 L9,9 L5,8 L10,5 Z" fill="#c8c8c8"/><path d="M8,12 L1,19" stroke="#c8c8c8" stroke-width="1.8"/></svg>
<div class="a" style="left:73px;top:685px;width:1811px;height:34px;background:#3a3b3d;"></div>
<div class="a" style="left:169px;top:685px;width:62px;height:34px;background:#4d4f51;"></div>
<div class="t" style="left:79.50px;top:694.85px;font-size:14px;color:#bbbbbb;letter-spacing:0.922px;">Deployment</div>
<div class="t" style="left:177.20px;top:694.85px;font-size:14px;color:#bbbbbb;letter-spacing:1.195px;">Output</div>
<svg class="a" style="left:241px;top:696px;" width="16" height="13" viewBox="0 0 16 13"><rect x="0" y="0" width="16" height="13" fill="#afb1b3"/><path d="M5,3 L9,6.5 L5,10" stroke="#3a3b3d" stroke-width="2" fill="none"/></svg>
<div class="t" style="left:262.20px;top:694.85px;font-size:14px;color:#bbbbbb;letter-spacing:0.516px;">Tomcat Localhost Log</div>
<svg class="a" style="left:422px;top:697px;" width="10" height="10" viewBox="0 0 10 10"><path d="M1,1 L9,9 M9,1 L1,9" stroke="#6c6f72" stroke-width="1.2"/></svg>
<div class="a" style="left:441px;top:687px;width:1px;height:30px;background:#4a4b4d;"></div>
<svg class="a" style="left:449px;top:696px;" width="16" height="13" viewBox="0 0 16 13"><rect x="0" y="0" width="16" height="13" fill="#afb1b3"/><path d="M5,3 L9,6.5 L5,10" stroke="#3a3b3d" stroke-width="2" fill="none"/></svg>
<div class="t" style="left:470.70px;top:694.85px;font-size:14px;color:#bbbbbb;letter-spacing:0.465px;">Tomcat Catalina Log</div>
<svg class="a" style="left:622px;top:697px;" width="10" height="10" viewBox="0 0 10 10"><path d="M1,1 L9,9 M9,1 L1,9" stroke="#6c6f72" stroke-width="1.2"/></svg>
<div class="a" style="left:642px;top:685px;width:1242px;height:34px;background:#3e3f41;"></div>
<div class="a" style="left:641px;top:687px;width:1px;height:30px;background:#4a4b4d;"></div>
<div class="a" style="left:73px;top:719px;width:1811px;height:5px;background:#505254;"></div>
<div class="a" style="left:73px;top:723px;width:35px;height:253px;background:#3e3f41;"></div>
<div class="a" style="left:107px;top:723px;width:1px;height:253px;background:#333435;"></div>
<svg class="a" style="left:83px;top:735px;" width="14" height="17" viewBox="0 0 14 17"><path d="M7,2 V16 M1.5,7.5 L7,2 L12.5,7.5" stroke="#6e7174" stroke-width="1.6" fill="none"/></svg>
<svg class="a" style="left:83px;top:767px;" width="14" height="17" viewBox="0 0 14 17"><path d="M7,1 V15 M1.5,9.5 L7,15 L12.5,9.5" stroke="#6e7174" stroke-width="1.6" fill="none"/></svg>
<div class="a" style="left:77px;top:795px;width:27px;height:27px;background:#4e5254;border-radius:4px"></div>
<svg class="a" style="left:82px;top:800px;" width="17" height="17" viewBox="0 0 17 17"><path d="M1,2 H16 M5,6.5 H13 A3.3,3.3 0 0 1 13,13 H8" stroke="#c8c8c8" stroke-width="2" fill="none"/><path d="M9,10 L6,13 L9,16 Z" fill="#c8c8c8"/><path d="M1,6.5 H3 M1,11 H3" stroke="#c8c8c8" stroke-width="2"/></svg>
<div class="a" style="left:77px;top:827px;width:27px;height:28px;background:#4e5254;border-radius:4px"></div>
<svg class="a" style="left:82px;top:832px;" width="17" height="17" viewBox="0 0 17 17"><path d="M1,3 H4 M1,7 H4 M1,15.5 H16" stroke="#c8c8c8" stroke-width="2"/><path d="M11,1 V11" stroke="#c8c8c8" stroke-width="2"/><path d="M6.5,7 L11,12 L15.5,7" stroke="#c8c8c8" stroke-width="2" fill="none"/></svg>
<svg class="a" style="left:82px;top:865px;" width="17" height="16" viewBox="0 0 17 16"><rect x="4" y="0" width="9" height="4" fill="#c8c8c8"/><rect x="0" y="5" width="17" height="7" rx="1" fill="#c8c8c8"/><rect x="4" y="10" width="9" height="5" fill="#3e3f41" stroke="#c8c8c8" stroke-width="1.5"/></svg>
<svg class="a" style="left:84px;top:897px;" width="13" height="17" viewBox="0 0 13 17"><rect x="1" y="1" width="11" height="2" fill="#6e7174"/><rect x="4" y="0" width="5" height="2" fill="#6e7174"/><rect x="2" y="4" width="9" height="12" fill="#6e7174"/></svg>
<div class="a" style="left:108px;top:724px;width:1776px;height:252px;background:#2b2b2b;"></div>
<div class="a" style="left:124px;top:724px;width:2px;height:22px;background:#c8c8c8;"></div>
<div class="a" style="left:1884px;top:654px;width:4px;height:322px;background:#3e3f41;"></div>
<div class="a" style="left:1884px;top:654px;width:1px;height:322px;background:#323232;"></div>
<div class="a" style="left:1673px;top:701px;width:215px;height:30px;background:#ffffff;border-top:1px solid #3a3a3a;border-bottom:1px solid #3a3a3a"></div>
<svg class="a" style="left:1644px;top:696px;" width="40" height="38" viewBox="0 0 40 38"><g transform="rotate(-14 20 19)"><rect x="4" y="4" width="32" height="30" rx="4" fill="#ef5b23"/><path d="M28,11 C22,8 10,8 11,14 C12,19 28,17 28,23 C28,29 15,29 10,26" stroke="#ffffff" stroke-width="4.5" fill="none" stroke-linecap="round"/></g></svg>
<svg class="a" style="left:1688px;top:706px;" width="20" height="21" viewBox="0 0 20 21"><rect x="2" y="5" width="16" height="9" fill="none" stroke="#2a7ad2" stroke-width="2.6"/><path d="M10,1 V21" stroke="#2a7ad2" stroke-width="2.8"/></svg>
<svg class="a" style="left:1716px;top:708px;" width="18" height="18" viewBox="0 0 18 18"><circle cx="4.5" cy="4.5" r="2.2" fill="none" stroke="#2a7ad2" stroke-width="1.4"/><path d="M12,10 C15,10 15,14 11,17" stroke="#2a7ad2" stroke-width="2.6" fill="none"/><circle cx="12.5" cy="11" r="2" fill="#2a7ad2"/></svg>
<svg class="a" style="left:1740px;top:707px;" width="22" height="22" viewBox="0 0 22 22"><circle cx="11" cy="11" r="9" fill="none" stroke="#2a7ad2" stroke-width="2"/><circle cx="8" cy="9" r="1.2" fill="#2a7ad2"/><circle cx="14" cy="9" r="1.2" fill="#2a7ad2"/><path d="M7,13 C9,16 13,16 15,13" stroke="#2a7ad2" stroke-width="1.8" fill="none"/></svg>
<svg class="a" style="left:1771px;top:706px;" width="17" height="23" viewBox="0 0 17 23"><rect x="5" y="1" width="7" height="13" rx="3.5" fill="#2a7ad2"/><path d="M2,10 C2,17 15,17 15,10 M8.5,16 V21 M4.5,21.5 H12.5" stroke="#2a7ad2" stroke-width="2" fill="none"/></svg>
<svg class="a" style="left:1796px;top:709px;" width="20" height="17" viewBox="0 0 20 17"><rect x="1" y="1" width="18" height="15" rx="2" fill="none" stroke="#2a7ad2" stroke-width="2"/><path d="M4,5 H16 M4,8.5 H16 M6,12 H14" stroke="#2a7ad2" stroke-width="1.6" stroke-dasharray="2 1.2"/></svg>
<svg class="a" style="left:1825px;top:708px;" width="21" height="19" viewBox="0 0 21 19"><circle cx="7" cy="5" r="3.6" fill="#c3c7cc"/><path d="M1,15 C1,9 13,9 13,15 Z" fill="#c3c7cc"/><text x="8" y="18.5" font-family="Liberation Sans" font-weight="bold" font-size="10" fill="#c3c7cc" stroke="#fff" stroke-width="0.6">15</text></svg>
<svg class="a" style="left:1851px;top:709px;" width="19" height="19" viewBox="0 0 19 19"><path d="M6,1 C7,3 12,3 13,1 L18,4 L16,8 L14,7 V18 H5 V7 L3,8 L1,4 Z" fill="#2a7ad2"/></svg>
<svg class="a" style="left:1878px;top:709px;" width="10" height="19" viewBox="0 0 10 19"><rect x="0" y="1" width="7" height="7" rx="1" fill="#2a7ad2"/><rect x="0" y="10" width="7" height="7" rx="1" fill="#2a7ad2"/></svg>
<div class="a" style="left:9px;top:976px;width:1879px;height:1px;background:#323232;"></div>
<div class="a" style="left:35px;top:977px;width:89px;height:26px;background:#2f3032;"></div>
<svg class="a" style="left:50px;top:984px;" width="15" height="15" viewBox="0 0 15 15"><path d="M0.5,0.5 L11,6.5 L0.5,12.5 Z" fill="#afb1b3"/><circle cx="12.5" cy="12.5" r="2.3" fill="#3bd52c"/></svg>
<div class="t" style="left:69.90px;top:984.75px;font-size:14px;color:#d0d0d0;"><u>4</u>: Run</div>
<svg class="a" style="left:140px;top:985px;" width="13" height="11" viewBox="0 0 13 11"><path d="M0,1 H2.5 M4,1 H13 M0,5.5 H2.5 M4,5.5 H13 M0,10 H2.5 M4,10 H13" stroke="#afb1b3" stroke-width="1.8"/></svg>
<div class="t" style="left:159.40px;top:984.75px;font-size:14px;color:#bbbbbb;"><u>6</u>: TODO</div>
<svg class="a" style="left:245px;top:983px;" width="16" height="16" viewBox="0 0 16 16"><rect x="0" y="0" width="8" height="5" fill="none" stroke="#afb1b3" stroke-width="1.4"/><rect x="0" y="6" width="8" height="4" fill="none" stroke="#afb1b3" stroke-width="1.4"/><rect x="0" y="11" width="8" height="4" fill="none" stroke="#afb1b3" stroke-width="1.4"/><path d="M8,5 L15,10 L8,15 Z" fill="#afb1b3"/></svg>
<div class="t" style="left:267.20px;top:984.75px;font-size:14px;color:#bbbbbb;letter-spacing:0.466px;">Application Servers</div>
<svg class="a" style="left:424px;top:984px;" width="15" height="12" viewBox="0 0 15 12"><path d="M14,0 C14,8 9,12 3,11 C0,10 1,5 4,3 C7,1 11,2 14,0 Z" fill="#afb1b3"/><path d="M2,11 C5,8 8,6 11,4" stroke="#3e3f41" stroke-width="1"/></svg>
<div class="t" style="left:445.80px;top:984.75px;font-size:14px;color:#bbbbbb;letter-spacing:0.306px;">Spring</div>
<svg class="a" style="left:516px;top:983px;" width="14" height="14" viewBox="0 0 14 14"><rect x="0" y="0" width="14" height="14" fill="#afb1b3"/><path d="M2.5,3 L6,6 L2.5,9" stroke="#3e3f41" stroke-width="1.5" fill="none"/><path d="M6.5,11 H11" stroke="#3e3f41" stroke-width="1.5"/></svg>
<div class="t" style="left:537.30px;top:984.75px;font-size:14px;color:#bbbbbb;letter-spacing:0.671px;">Terminal</div>
<svg class="a" style="left:625px;top:983px;" width="16" height="15" viewBox="0 0 16 15"><path d="M0,0 H13 V4 H4 V13 H0 Z" fill="#afb1b3"/><rect x="5" y="5" width="11" height="10" fill="#afb1b3"/><path d="M8,8 V13 M12,8 V13" stroke="#3e3f41" stroke-width="1.5"/><path d="M6.5,8 H9.5 M10.5,8 H13.5" stroke="#3e3f41" stroke-width="1"/></svg>
<div class="t" style="left:645.00px;top:984.75px;font-size:14px;color:#bbbbbb;letter-spacing:0.138px;">Java Enterprise</div>
<svg class="a" style="left:1782px;top:983px;" width="17" height="17" viewBox="0 0 17 17"><path d="M16,16 H8.5 A7.5,7.5 0 1 1 16,8.5 Z" fill="none" stroke="#afb1b3" stroke-width="1.8" stroke-linejoin="round"/></svg>
<div class="t" style="left:1804.30px;top:985.05px;font-size:14px;color:#bbbbbb;letter-spacing:0.169px;">Event Log</div>
<div class="a" style="left:9px;top:1003px;width:1879px;height:1px;background:#323232;"></div>
<svg class="a" style="left:21px;top:1010px;" width="17" height="17" viewBox="0 0 17 17"><rect x="4" y="1" width="11.5" height="11.5" fill="none" stroke="#afb1b3" stroke-width="1.4"/><path d="M1.5,4 V15.5 H13" fill="none" stroke="#afb1b3" stroke-width="1.4"/></svg>
<div class="t" style="left:48.20px;top:1009.36px;font-size:16px;color:#bbbbbb;letter-spacing:0.199px;">All files are up-to-date (6 minutes ago)</div>
<div class="t" style="left:1599.20px;top:1010.30px;font-size:15px;color:#bbbbbb;letter-spacing:-0.676px;">1:1</div>
<div class="t" style="left:1634.60px;top:1010.30px;font-size:15px;color:#bbbbbb;letter-spacing:-1.223px;">CRLF</div>
<svg class="a" style="left:1674px;top:1011px;" width="9" height="13" viewBox="0 0 9 13"><path d="M0.5,5 L4.5,0.5 L8.5,5 Z M0.5,8 L4.5,12.5 L8.5,8 Z" fill="#afb1b3"/></svg>
<div class="t" style="left:1695.50px;top:1010.30px;font-size:15px;color:#bbbbbb;letter-spacing:0.126px;">UTF-8</div>
<svg class="a" style="left:1743px;top:1011px;" width="9" height="13" viewBox="0 0 9 13"><path d="M0.5,5 L4.5,0.5 L8.5,5 Z M0.5,8 L4.5,12.5 L8.5,8 Z" fill="#afb1b3"/></svg>
<div class="t" style="left:1764.00px;top:1010.30px;font-size:15px;color:#bbbbbb;letter-spacing:0.281px;">4 spaces</div>
<svg class="a" style="left:1833px;top:1011px;" width="9" height="13" viewBox="0 0 9 13"><path d="M0.5,5 L4.5,0.5 L8.5,5 Z M0.5,8 L4.5,12.5 L8.5,8 Z" fill="#afb1b3"/></svg>
<svg class="a" style="left:1854px;top:1010px;" width="16" height="15" viewBox="0 0 16 15"><path d="M2.5,7 V4 A3,3 0 0 1 8.5,4 V5" fill="none" stroke="#afb1b3" stroke-width="1.8"/><rect x="5" y="7" width="10" height="8" fill="#afb1b3"/></svg>
<svg class="a" style="left:1883px;top:1013px;" width="5" height="10" viewBox="0 0 5 10"><path d="M0,4 L5,0 V4 Z M0,6 H5 L5,10 Z" fill="#afb1b3"/></svg>
<svg class="a" style="left:1449px;top:116px;" width="14" height="21" viewBox="0 0 14 21"><path d="M1,1 V17 L5,13 L8,20 L10.5,19 L7.5,12 H13 Z" fill="#ffffff" stroke="#000000" stroke-width="1" stroke-linejoin="round"/></svg>
</body></html>
